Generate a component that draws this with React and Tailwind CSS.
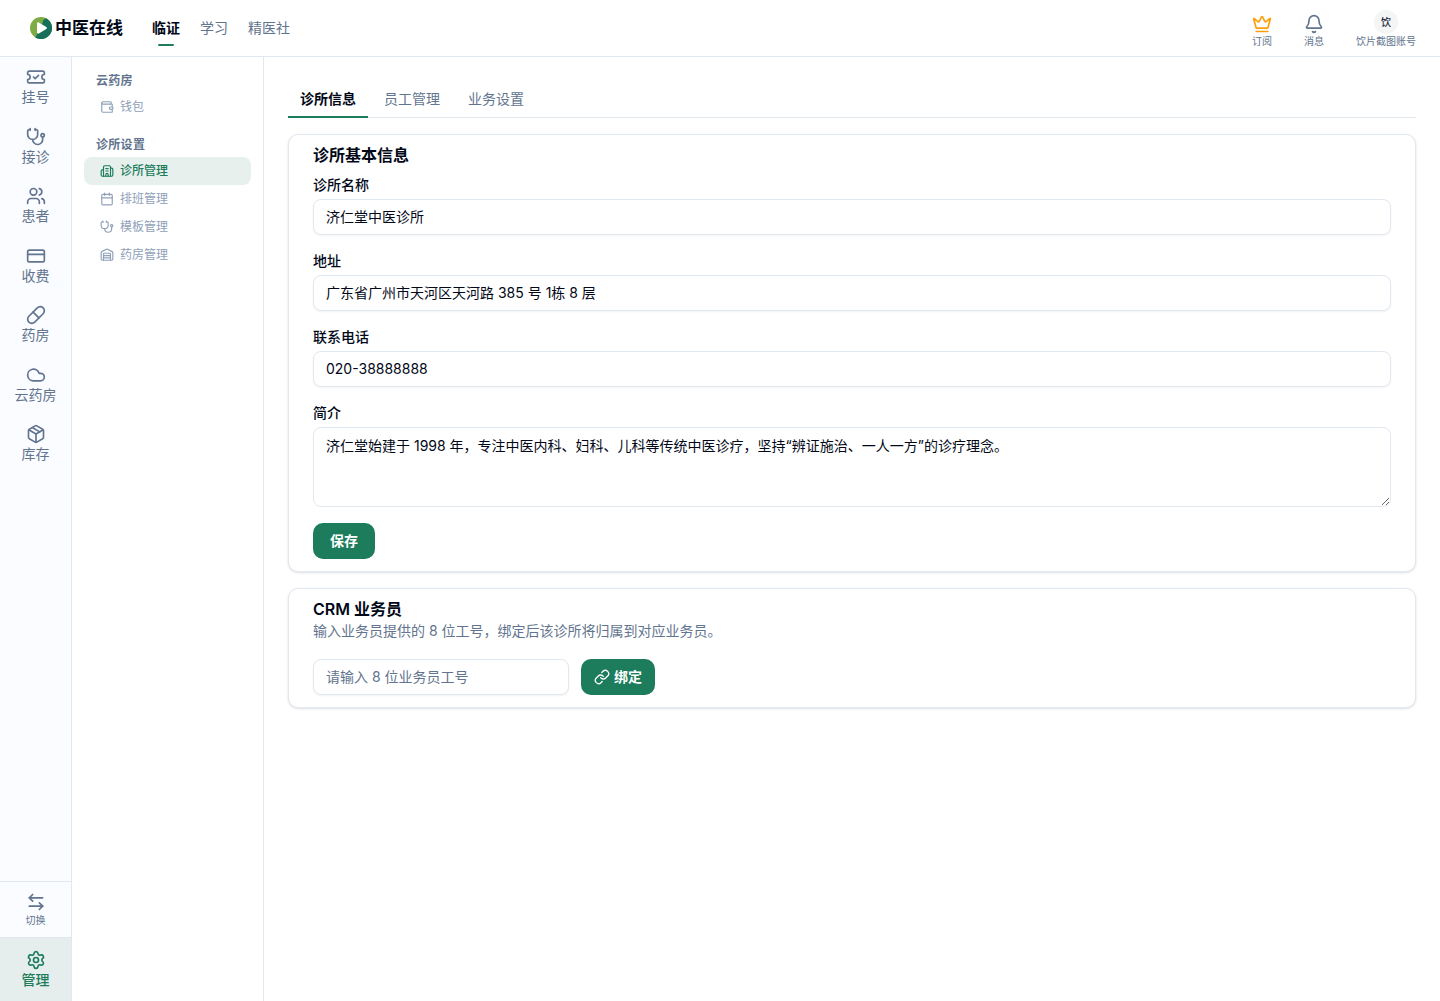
import {
    ArrowLeftRight,
    Bell,
    Building2,
    Calendar,
    Cloud,
    CreditCard,
    Crown,
    Link,
    Package,
    Pill,
    Settings,
    Stethoscope,
    TicketCheck,
    Users,
    Wallet,
    Warehouse,
} from "lucide-react";

const TOP_NAV = [
    { id: 1, title: "临证", active: true },
    { id: 2, title: "学习" },
    { id: 3, title: "精医社" },
];

const RAIL = [
    { id: 1, title: "挂号", icon: TicketCheck },
    { id: 2, title: "接诊", icon: Stethoscope },
    { id: 3, title: "患者", icon: Users },
    { id: 4, title: "收费", icon: CreditCard },
    { id: 5, title: "药房", icon: Pill },
    { id: 6, title: "云药房", icon: Cloud },
    { id: 7, title: "库存", icon: Package },
];

const MENU = [
    {
        id: 1,
        title: "云药房",
        items: [{ id: 1, title: "钱包", icon: Wallet }],
    },
    {
        id: 2,
        title: "诊所设置",
        items: [
            { id: 1, title: "诊所管理", icon: Building2, active: true },
            { id: 2, title: "排班管理", icon: Calendar },
            { id: 3, title: "模板管理", icon: Stethoscope },
            { id: 4, title: "药房管理", icon: Warehouse },
        ],
    },
];

const TABS = [
    { id: 1, title: "诊所信息", active: true },
    { id: 2, title: "员工管理" },
    { id: 3, title: "业务设置" },
];

const FIELDS = [
    { id: "name", label: "诊所名称", value: "济仁堂中医诊所" },
    { id: "address", label: "地址", value: "广东省广州市天河区天河路 385 号 1栋 8 层" },
    { id: "phone", label: "联系电话", value: "020-38888888" },
];

const inputStyle =
    "h-9 rounded-lg border border-slate-200 bg-white px-3 pb-0.5 text-sm shadow-xs outline-none placeholder:text-slate-500";

function Logo() {
    return (
        <svg viewBox="0 0 22 22" className="size-[22px]" aria-hidden="true">
            <circle cx="11" cy="11" r="11" fill="#7fab45" />
            <path d="M16 1.200A11 11 0 1 1 5 20.200C7.500 19 6.600 16.500 8 13.500L13 5C12.600 3.500 14 2 16 1.200Z" fill="#17705a" />
            <path
                d="M8.200 6.500L15.700 11L8.200 15.500Z"
                fill="#fff"
                stroke="#fff"
                strokeWidth="2.4"
                strokeLinejoin="round"
            />
        </svg>
    );
}

function Header() {
    return (
        <header className="flex h-[57px] shrink-0 items-center border-b border-slate-200 pl-[30px] pr-6">
            <a href="#" className="flex items-center gap-[3px] text-[17px] leading-6 font-semibold">
                <Logo />
                中医在线
            </a>
            <nav className="ml-[29px] flex gap-5 text-sm">
                {TOP_NAV.map((nav) => (
                    <a
                        key={nav.id}
                        href="#"
                        className={nav.active ? "relative font-semibold" : "text-slate-500"}
                    >
                        {nav.title}
                        {nav.active && (
                            <span className="absolute top-[26px] left-1/2 h-0.5 w-4 -translate-x-1/2 rounded-full bg-[#1c7c5b]" />
                        )}
                    </a>
                ))}
            </nav>
            <div className="ml-auto flex items-end gap-8 pt-px text-[10px] leading-3 text-slate-500">
                <button className="flex flex-col items-center gap-px">
                    <Crown className="size-5 text-[#ff9f0a]" />
                    订阅
                </button>
                <button className="flex flex-col items-center gap-px">
                    <Bell className="size-5" />
                    消息
                </button>
                <button className="flex flex-col items-center gap-px">
                    <span className="flex size-6 items-center justify-center rounded-full bg-[#f4f5f5] font-medium text-slate-800">
                        饮
                    </span>
                    饮片截图账号
                </button>
            </div>
        </header>
    );
}

function Rail() {
    return (
        <aside className="flex w-[72px] shrink-0 flex-col border-r border-slate-200 bg-[#fafcff] text-sm leading-tight text-slate-500">
            <nav className="flex flex-col">
                {RAIL.map(({ id, title, icon: Icon }) => (
                    <a key={id} href="#" className="flex flex-col items-center gap-px pt-2.5 pb-[11px]">
                        <Icon className="size-5" />
                        {title}
                    </a>
                ))}
            </nav>
            <button className="mt-auto flex flex-col items-center gap-0.5 border-t border-slate-200 py-2.5 text-[10px] leading-tight">
                <ArrowLeftRight className="size-5" />
                切换
            </button>
            <a
                href="#"
                className="flex flex-col items-center gap-px border-t border-slate-200 bg-[#e5eeec] pt-3 pb-[13px] font-medium text-[#1c7c5b]"
            >
                <Settings className="size-5" />
                管理
            </a>
        </aside>
    );
}

function Menu() {
    return (
        <aside className="flex w-48 shrink-0 flex-col gap-4 border-r border-slate-200 px-3 py-4 text-xs">
            {MENU.map((group) => (
                <section key={group.id}>
                    <h2 className="mb-1 px-3 font-semibold tracking-wide text-slate-500">{group.title}</h2>
                    {group.items.map(({ id, title, icon: Icon, active }) => (
                        <a
                            key={id}
                            href="#"
                            className={
                                active
                                    ? "flex h-7 items-center gap-1.5 rounded-lg bg-[#e8f0ee] px-4 font-medium text-[#1c7c5b]"
                                    : "flex h-7 items-center gap-1.5 px-4 text-slate-400"
                            }
                        >
                            <Icon className="size-3.5" />
                            {title}
                        </a>
                    ))}
                </section>
            ))}
        </aside>
    );
}

function ClinicCard() {
    return (
        <section className="mt-4 rounded-[10px] border border-slate-200 bg-white px-6 py-3 shadow-sm">
            <h2 className="mb-3 text-base leading-4 font-semibold">诊所基本信息</h2>
            <form className="flex flex-col gap-4">
                {FIELDS.map((field) => (
                    <div key={field.id} className="flex flex-col gap-1">
                        <label htmlFor={field.id} className="text-sm font-medium">
                            {field.label}
                        </label>
                        <input id={field.id} defaultValue={field.value} className={inputStyle} />
                    </div>
                ))}
                <div className="flex flex-col gap-1">
                    <label htmlFor="intro" className="text-sm font-medium">
                        简介
                    </label>
                    <textarea
                        id="intro"
                        className="h-20 resize-y rounded-lg border border-slate-200 bg-white px-3 py-2 text-sm outline-none"
                        defaultValue="济仁堂始建于 1998 年，专注中医内科、妇科、儿科等传统中医诊疗，坚持“辨证施治、一人一方”的诊疗理念。"
                    />
                </div>
                <button
                    type="button"
                    className="h-9 self-start rounded-[10px] bg-[#1c7c5b] px-[17px] text-sm font-semibold text-white"
                >
                    保存
                </button>
            </form>
        </section>
    );
}

function CrmCard() {
    return (
        <section className="mt-4 rounded-[10px] border border-slate-200 bg-white px-6 py-3 shadow-sm">
            <h2 className="text-base leading-4 font-semibold">CRM 业务员</h2>
            <p className="mt-1 text-sm text-slate-500">
                输入业务员提供的 8 位工号，绑定后该诊所将归属到对应业务员。
            </p>
            <form className="mt-[18px] flex gap-3">
                <input
                    aria-label="业务员工号"
                    placeholder="请输入 8 位业务员工号"
                    className={inputStyle + " w-64"}
                />
                <button
                    type="button"
                    className="flex h-9 items-center gap-1 rounded-[10px] bg-[#1c7c5b] px-[13px] text-sm font-semibold text-white"
                >
                    <Link className="size-4" />
                    绑定
                </button>
            </form>
        </section>
    );
}

export default function App() {
    return (
        <div className="flex min-h-screen flex-col bg-white font-['Inter','Noto_Sans_CJK_SC',sans-serif] text-[#020817]">
            <Header />
            <div className="flex flex-1">
                <Rail />
                <Menu />
                <main className="min-w-0 flex-1 p-6">
                    <div role="tablist" className="flex gap-1 border-b border-slate-200">
                        {TABS.map((tab) => (
                            <button
                                key={tab.id}
                                role="tab"
                                aria-selected={Boolean(tab.active)}
                                className={
                                    tab.active
                                        ? "-mb-px border-b-2 border-[#1c7c5b] px-3 pt-2 pb-[7px] text-sm font-semibold"
                                        : "-mb-px border-b-2 border-transparent px-3 pt-2 pb-[7px] text-sm text-slate-500"
                                }
                            >
                                {tab.title}
                            </button>
                        ))}
                    </div>
                    <ClinicCard />
                    <CrmCard />
                </main>
            </div>
        </div>
    );
}
